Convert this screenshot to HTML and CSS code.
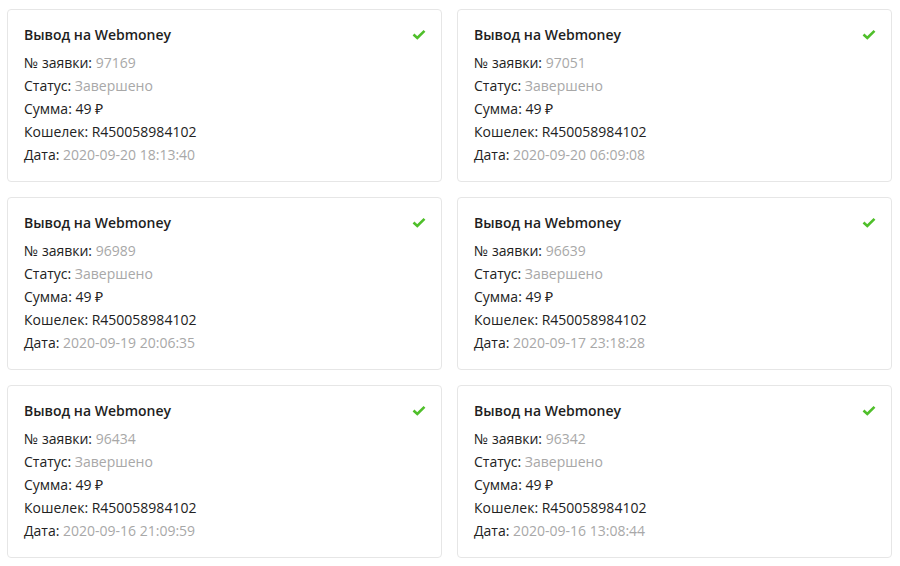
FILE: index.html
```html
<!DOCTYPE html>
<html lang="ru">
<head>
    <meta charset="UTF-8">
    <title>Выводы</title>
    <link rel="stylesheet" href="styles.css">
</head>
<body>
    <div class="payouts">
        <div class="card">
            <div class="card-head">
                <span class="card-title">Вывод на Webmoney</span>
                <svg class="check" viewBox="0 0 14 11" width="14" height="11"><path d="M1.5 5.5 L5.3 9 L12.5 1.8" fill="none" stroke="#4fbf2a" stroke-width="2.6"/></svg>
            </div>
            <div class="row">№ заявки: <span class="muted">97169</span></div>
            <div class="row">Статус: <span class="muted">Завершено</span></div>
            <div class="row">Сумма: 49 ₽</div>
            <div class="row">Кошелек: R450058984102</div>
            <div class="row">Дата: <span class="muted">2020-09-20 18:13:40</span></div>
        </div>
        <div class="card">
            <div class="card-head">
                <span class="card-title">Вывод на Webmoney</span>
                <svg class="check" viewBox="0 0 14 11" width="14" height="11"><path d="M1.5 5.5 L5.3 9 L12.5 1.8" fill="none" stroke="#4fbf2a" stroke-width="2.6"/></svg>
            </div>
            <div class="row">№ заявки: <span class="muted">97051</span></div>
            <div class="row">Статус: <span class="muted">Завершено</span></div>
            <div class="row">Сумма: 49 ₽</div>
            <div class="row">Кошелек: R450058984102</div>
            <div class="row">Дата: <span class="muted">2020-09-20 06:09:08</span></div>
        </div>
        <div class="card">
            <div class="card-head">
                <span class="card-title">Вывод на Webmoney</span>
                <svg class="check" viewBox="0 0 14 11" width="14" height="11"><path d="M1.5 5.5 L5.3 9 L12.5 1.8" fill="none" stroke="#4fbf2a" stroke-width="2.6"/></svg>
            </div>
            <div class="row">№ заявки: <span class="muted">96989</span></div>
            <div class="row">Статус: <span class="muted">Завершено</span></div>
            <div class="row">Сумма: 49 ₽</div>
            <div class="row">Кошелек: R450058984102</div>
            <div class="row">Дата: <span class="muted">2020-09-19 20:06:35</span></div>
        </div>
        <div class="card">
            <div class="card-head">
                <span class="card-title">Вывод на Webmoney</span>
                <svg class="check" viewBox="0 0 14 11" width="14" height="11"><path d="M1.5 5.5 L5.3 9 L12.5 1.8" fill="none" stroke="#4fbf2a" stroke-width="2.6"/></svg>
            </div>
            <div class="row">№ заявки: <span class="muted">96639</span></div>
            <div class="row">Статус: <span class="muted">Завершено</span></div>
            <div class="row">Сумма: 49 ₽</div>
            <div class="row">Кошелек: R450058984102</div>
            <div class="row">Дата: <span class="muted">2020-09-17 23:18:28</span></div>
        </div>
        <div class="card">
            <div class="card-head">
                <span class="card-title">Вывод на Webmoney</span>
                <svg class="check" viewBox="0 0 14 11" width="14" height="11"><path d="M1.5 5.5 L5.3 9 L12.5 1.8" fill="none" stroke="#4fbf2a" stroke-width="2.6"/></svg>
            </div>
            <div class="row">№ заявки: <span class="muted">96434</span></div>
            <div class="row">Статус: <span class="muted">Завершено</span></div>
            <div class="row">Сумма: 49 ₽</div>
            <div class="row">Кошелек: R450058984102</div>
            <div class="row">Дата: <span class="muted">2020-09-16 21:09:59</span></div>
        </div>
        <div class="card">
            <div class="card-head">
                <span class="card-title">Вывод на Webmoney</span>
                <svg class="check" viewBox="0 0 14 11" width="14" height="11"><path d="M1.5 5.5 L5.3 9 L12.5 1.8" fill="none" stroke="#4fbf2a" stroke-width="2.6"/></svg>
            </div>
            <div class="row">№ заявки: <span class="muted">96342</span></div>
            <div class="row">Статус: <span class="muted">Завершено</span></div>
            <div class="row">Сумма: 49 ₽</div>
            <div class="row">Кошелек: R450058984102</div>
            <div class="row">Дата: <span class="muted">2020-09-16 13:08:44</span></div>
        </div>
    </div>
</body>
</html>
```

FILE: styles.css
```css
body {
    margin: 0;
    background: #fff;
    font-family: "Open Sans", Arial, sans-serif;
    font-size: 14px;
    color: #222;
}

.payouts {
    display: grid;
    grid-template-columns: 435px 435px;
    gap: 15px;
    padding: 9px 0 0 7px;
}

.card {
    border: 1px solid #e6e6e6;
    border-radius: 4px;
    padding: 13px 15px 15px 16px;
    line-height: 23px;
}

.card-head {
    display: flex;
    justify-content: space-between;
    align-items: center;
    margin-bottom: 5px;
}

.card-title {
    font-weight: 600;
    color: #1e1e1e;
}

.check {
    display: block;
}

.muted {
    color: #a8a8a8;
}
```
